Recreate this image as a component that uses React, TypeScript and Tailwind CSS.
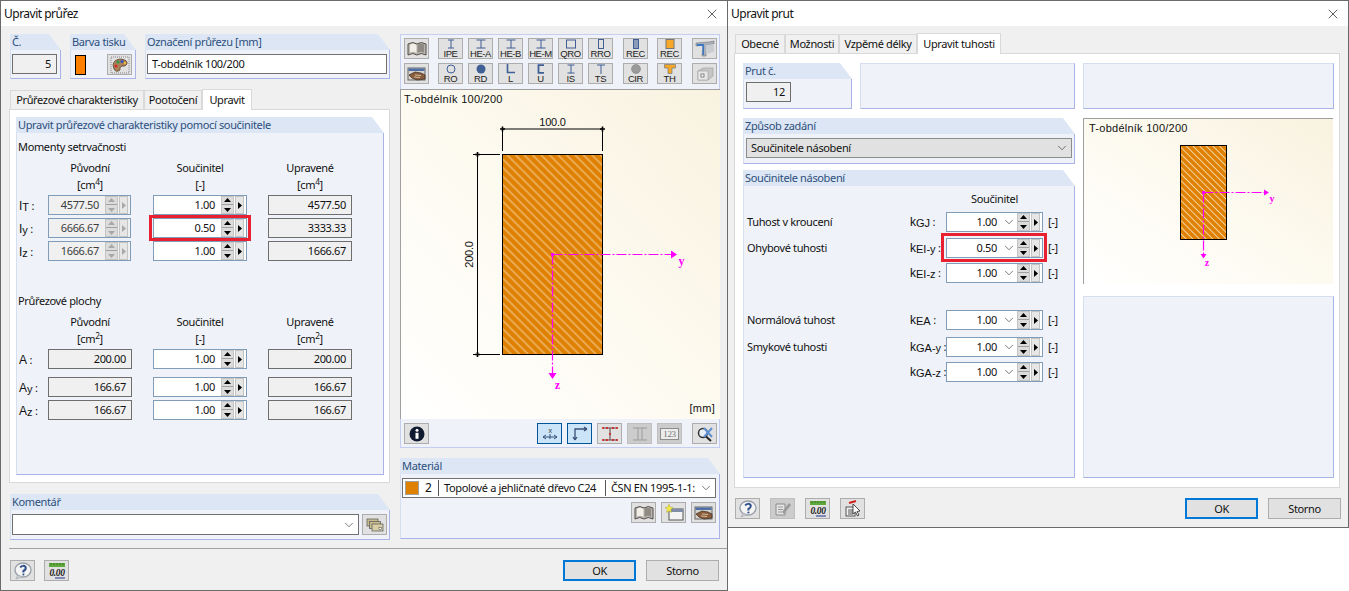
import type { ReactNode } from "react";
import { ChevronDown, X } from "lucide-react";

const NAVY = "#3f5f95";

function Group({ title, className = "", children }: { title?: string; className?: string; children?: ReactNode }) {
  return (
    <div className={`flex flex-col ${className}`}>
      {title && (
        <div className="h-4 shrink-0 bg-[#dce6f4] pl-[2px] text-[#2d4f7c] leading-4 [clip-path:polygon(0_0,calc(100%-12px)_0,100%_100%,0_100%)]">
          {title}
        </div>
      )}
      <div className={`flex-1 min-h-0 border-r border-b border-l border-r-[#a9b3e6] border-b-[#a9b3e6] border-l-[#d5dff0] bg-[#eff3f9] ${title ? "" : "border-t border-t-[#d5dff0]"}`}>
        {children}
      </div>
    </div>
  );
}

function Tri({ dir, color = "#000" }: { dir: "up" | "down" | "right"; color?: string }) {
  const pts = dir === "up" ? "0,4 3.5,0 7,4" : dir === "down" ? "0,0 7,0 3.5,4" : "0,0 4,3.5 0,7";
  const size = dir === "right" ? "h-[7px] w-1" : "h-1 w-[7px]";
  return (
    <svg viewBox={dir === "right" ? "0 0 4 7" : "0 0 7 4"} className={size}>
      <polygon points={pts} fill={color} />
    </svg>
  );
}

function Spin({ value, off, combo, width = "w-full" }: { value: string; off?: boolean; combo?: boolean; width?: string }) {
  const arrow = off ? "#a8a8a8" : "#000";
  return (
    <div className={`flex h-5 items-center border border-[#7f9db9] ${width} ${off ? "bg-[#f0f0f0] text-[#3c3c3c]" : "bg-white"}`}>
      <span className="flex-1 pr-[5px] text-right">{value}</span>
      {combo && <ChevronDown size={14} strokeWidth={1.2} className="text-[#444]" />}
      <div className="ml-px flex h-[18px] w-[13px] flex-col items-center justify-around border border-[#c4c4c4] bg-[#dcdcdc]">
        <Tri dir="up" color={arrow} />
        <div className="h-px w-full bg-[#a0a0a0]" />
        <Tri dir="down" color={arrow} />
      </div>
      <div className="mx-[2px] ml-px flex h-[18px] w-[9px] items-center justify-center border border-[#c4c4c4] bg-[#e6e6e6]">
        <Tri dir="right" color={arrow} />
      </div>
    </div>
  );
}

function Gray({ value, className = "" }: { value: string; className?: string }) {
  return <div className={`flex h-5 items-center justify-end border border-[#6e6e6e] bg-[#f0f0f0] pr-[5px] ${className}`}>{value}</div>;
}

function Red({ className }: { className: string }) {
  return <div className={`pointer-events-none absolute z-10 border-[3px] border-[#e8202f] ${className}`} />;
}

function Btn({ children, className = "", active, off }: { children?: ReactNode; className?: string; active?: boolean; off?: boolean }) {
  const look = active ? "border-[#005499] bg-[#cce4f7]" : off ? "border-[#bfbfbf] bg-[#cccccc]" : "border-[#adadad] bg-[#e1e1e1]";
  return <div className={`flex h-[21px] w-[25px] shrink-0 flex-col items-center justify-center border ${look} ${className}`}>{children}</div>;
}

function Book() {
  return (
    <svg viewBox="0 0 20 16" className="h-4 w-5">
      <path d="M1 3 Q6 0 10 3 Q14 0 19 3 V14 Q14 11 10 14 Q6 11 1 14 Z" fill="#b9b4ad" stroke="#55504c" strokeWidth="1" />
      <path d="M3 3.5 Q7 2 9.5 4 V12 Q7 10 3 11.5 Z" fill="#f2efe8" />
      <path d="M17 3.5 Q13 2 10.5 4 V12 Q13 10 17 11.5 Z" fill="#8f8a84" />
    </svg>
  );
}

function Hand() {
  return (
    <svg viewBox="0 0 20 16" className="h-4 w-5">
      <rect x="1" y="2" width="17" height="12" fill="#d8d4cc" stroke="#666" />
      <rect x="1.5" y="2.5" width="16" height="2.5" fill="#4f6fa8" />
      <path d="M2 9 L8 6 L14 7 L18 9 V13 L10 14 L5 12 Z" fill="#8a5d3c" stroke="#3a2a20" strokeWidth="0.7" />
      <path d="M8 9 L14 9.5 M7 11 L13 11.5" stroke="#e8d2b6" strokeWidth="0.8" />
    </svg>
  );
}

function Profile({ label, children }: { label: string; children: ReactNode }) {
  return (
    <Btn>
      <svg viewBox="0 0 14 10" className="h-[10px] w-[14px] shrink-0">
        {children}
      </svg>
      <span className="font-['Liberation_Sans',sans-serif] text-[9.5px] leading-[9px] tracking-[-0.4px] text-[#222]">{label}</span>
    </Btn>
  );
}

const iBeam = (half: number) => <path d={`M${7 - half} 1H${7 + half}M7 1V9M${7 - half} 9H${7 + half}`} stroke={NAVY} strokeWidth="1" fill="none" />;

const row1: ReactNode[] = [
  <Btn key="b"><Book /></Btn>,
  <Profile key="ipe" label="IPE">{iBeam(3)}</Profile>,
  <Profile key="hea" label="HE-A">{iBeam(4.5)}</Profile>,
  <Profile key="heb" label="HE-B">{iBeam(4.5)}</Profile>,
  <Profile key="hem" label="HE-M">{iBeam(4.5)}</Profile>,
  <Profile key="qro" label="QRO"><rect x="2.5" y="1" width="9" height="8" fill="none" stroke={NAVY} /></Profile>,
  <Profile key="rro" label="RRO"><rect x="4.5" y="0.5" width="5" height="9" fill="none" stroke={NAVY} /></Profile>,
  <Profile key="rec" label="REC"><rect x="4.5" y="0.5" width="5" height="9" fill="#8b9cba" stroke={NAVY} /></Profile>,
  <Profile key="reco" label="REC"><rect x="3" y="0.5" width="8" height="9" fill="#f6a828" stroke="#777" /></Profile>,
  <Btn key="p1">
    <svg viewBox="0 0 20 17" className="h-[17px] w-5">
      <path d="M1 3 L14 2 L19 1 V4 L12 5 L11 16 L7 16 L8 5 L1 6 Z" fill="#a9b0ba" stroke="#777" strokeWidth="0.6" />
      <path d="M2 4 H9 V15 H7.5 V6 H2 Z" fill="#3b78c4" />
      <path d="M11 5 L19 4 V12 L11 14 Z" fill="#c9ccd0" />
    </svg>
  </Btn>,
];

const row2: ReactNode[] = [
  <Btn key="h"><Hand /></Btn>,
  <Profile key="ro" label="RO"><circle cx="7" cy="5" r="4" fill="none" stroke={NAVY} /></Profile>,
  <Profile key="rd" label="RD"><circle cx="7" cy="5" r="4.5" fill={NAVY} /></Profile>,
  <Profile key="l" label="L"><path d="M3.5 0V8.5H11" fill="none" stroke={NAVY} strokeWidth="1.6" /></Profile>,
  <Profile key="u" label="U"><path d="M10 1.2H4.5V8.8H10" fill="none" stroke={NAVY} strokeWidth="1.8" /></Profile>,
  <Profile key="is" label="IS">{iBeam(3.5)}</Profile>,
  <Profile key="ts" label="TS"><path d="M3 1H11M7 1V10" fill="none" stroke={NAVY} /></Profile>,
  <Profile key="cir" label="CIR"><circle cx="7" cy="5" r="4.5" fill="#9a9a9a" stroke="#777" strokeWidth="0.5" /></Profile>,
  <Profile key="th" label="TH"><path d="M1.5 .5H12.5V4H9V9.5H5V4H1.5Z" fill="#f6a828" stroke="#777" strokeWidth="0.7" /></Profile>,
  <Btn key="p2">
    <svg viewBox="0 0 20 16" className="h-4 w-5">
      <path d="M3 5 L8 2 H18 V10 L13 14 H3 Z" fill="#c6c6c6" stroke="#9a9a9a" strokeWidth="0.6" />
      <rect x="3" y="5" width="10" height="9" fill="#e8e8e8" stroke="#9a9a9a" strokeWidth="0.6" />
      <rect x="6" y="8" width="3" height="3" fill="#fff" stroke="#555" strokeWidth="0.7" />
    </svg>
  </Btn>,
];

const toolGaps = ["", "ml-[9px]", "ml-[5px]", "ml-[5px]", "ml-[5px]", "ml-[5px]", "ml-[5px]", "ml-[10px]", "ml-[9px]", "ml-[10px]"];

function ToolRow({ items, className = "" }: { items: ReactNode[]; className?: string }) {
  return (
    <div className={`flex pl-[3px] ${className}`}>
      {items.map((item, i) => (
        <div key={i} className={toolGaps[i]}>
          {item}
        </div>
      ))}
    </div>
  );
}

function HelpIcon() {
  return (
    <svg viewBox="0 0 20 18" className="h-[18px] w-5">
      <ellipse cx="10" cy="8" rx="8" ry="7" fill="#f4f4f4" stroke="#9aa0aa" strokeWidth="1.4" />
      <path d="M5 13 L3 17 L9 14.5 Z" fill="#cfcfcf" stroke="#9aa0aa" strokeWidth="0.6" />
      <path d="M7.2 5.5 Q10 2.5 12.6 5 Q13.4 7.5 10.4 9 V10.5" fill="none" stroke="#31518c" strokeWidth="2" />
      <circle cx="10.4" cy="12.5" r="1.1" fill="#31518c" />
    </svg>
  );
}

function NumIcon() {
  return (
    <svg viewBox="0 0 20 18" className="h-[18px] w-5">
      <rect x="2" y="1" width="16" height="4" fill="#5fa83c" />
      <path d="M4 1V3M7 1V3M10 1V3M13 1V3M16 1V3" stroke="#2f6a1e" strokeWidth="0.7" />
      <text x="10" y="14" textAnchor="middle" fontSize="9.5" fontStyle="italic" fontWeight="700" fontFamily="Liberation Serif, serif" fill="#222">0.00</text>
      <path d="M8 16H18" stroke="#3a4f9a" strokeWidth="1.2" />
    </svg>
  );
}

function Sub({ base, sub }: { base: string; sub: string }) {
  return (
    <span className="font-['Liberation_Sans',sans-serif] text-[12px] tracking-normal">
      {base}
      <span className="align-[-1px] text-[11px]">{sub}</span>
    </span>
  );
}

function Diagram({ id, viewBox, className, hatch, children }: { id: string; viewBox: string; className: string; hatch: number; children: ReactNode }) {
  return (
    <svg viewBox={viewBox} className={`absolute inset-0 ${className}`}>
      <defs>
        <pattern id={id} width={hatch} height={hatch} patternUnits="userSpaceOnUse" patternTransform="rotate(-45)">
          <rect width={hatch} height={hatch} fill="#e08000" />
          <line x1={hatch / 2} y1="0" x2={hatch / 2} y2={hatch} stroke="#f5d5a5" strokeWidth="1" />
        </pattern>
      </defs>
      {children}
    </svg>
  );
}

function Canvas({ className, children }: { className: string; children: ReactNode }) {
  return (
    <div className={`relative flex flex-col justify-between border-t border-l border-[#a0a0a0] bg-linear-to-bl from-[#f8f2df] via-[#fdfaf0] to-white font-['Liberation_Sans',sans-serif] text-[11px] tracking-[0.25px] ${className}`}>
      {children}
    </div>
  );
}

const colTemplate = "grid grid-cols-[31px_84px_21px_94px_21px_84px] items-center";

function ColHeads({ unit }: { unit: ReactNode }) {
  return (
    <div className={`${colTemplate} mt-[5px] text-center leading-4`}>
      <div />
      <div>Původní</div>
      <div />
      <div>Součinitel</div>
      <div />
      <div>Upravené</div>
      <div />
      <div className="mt-px h-[18px]">[cm{unit}]</div>
      <div />
      <div className="mt-px h-[18px]">[-]</div>
      <div />
      <div className="mt-px h-[18px]">[cm{unit}]</div>
    </div>
  );
}

function MomentRow({ base, sub, a, b, c, mark, className = "" }: { base: string; sub: string; a: string; b: string; c: string; mark?: boolean; className?: string }) {
  return (
    <div className={`${colTemplate} ${className}`}>
      <div className="pl-[2px] pt-[3px]"><Sub base={base} sub={sub} /> :</div>
      <Spin value={a} off width="w-[83px]" />
      <div />
      <div className="relative">
        {mark && <Red className="-left-1 -right-1 -top-[3px] -bottom-[3px]" />}
        <Spin value={b} />
      </div>
      <div />
      <Gray value={c} />
    </div>
  );
}

function AreaRow({ base, sub, a, b, className = "" }: { base: string; sub?: string; a: string; b: string; className?: string }) {
  return (
    <div className={`${colTemplate} ${className}`}>
      <div className="pl-[2px] pt-[3px]"><Sub base={base} sub={sub ?? ""} /> :</div>
      <Gray value={a} />
      <div />
      <Spin value={b} />
      <div />
      <Gray value={a} />
    </div>
  );
}

function Tab({ label, width, active }: { label: string; width: string; active?: boolean }) {
  return (
    <div className={`flex items-center justify-center border border-b-0 border-[#d9d9d9] ${width} ${active ? "z-10 -mb-px h-[21px] bg-white" : "h-[19px] bg-[#f0f0f0]"}`}>
      {label}
    </div>
  );
}

function FooterButtons() {
  return (
    <div className="flex gap-[10px]">
      <div className="flex h-[21px] w-[73px] items-center justify-center border-2 border-[#0078d7] bg-[#e1e1e1]">OK</div>
      <div className="flex h-[21px] w-[73px] items-center justify-center border border-[#adadad] bg-[#e1e1e1]">Storno</div>
    </div>
  );
}

function StiffRow({ label, base, sub, value, mark, className = "" }: { label?: string; base: string; sub: string; value: string; mark?: boolean; className?: string }) {
  return (
    <div className={`flex h-5 items-center ${className}`}>
      <div className="w-[166px] pl-[3px]">{label}</div>
      <div className="w-[36px] whitespace-nowrap"><Sub base={base} sub={sub} /> :</div>
      <div className="relative w-[97px]">
        {mark && <Red className="-left-[5px] -right-1 -top-[5px] -bottom-1" />}
        <Spin value={value} combo />
      </div>
      <div className="ml-[5px]">[-]</div>
    </div>
  );
}

function LeftWindow() {
  return (
    <div className="flex h-[591px] w-[728px] shrink-0 flex-col border-t border-r border-b border-l border-[#6a6a6a] bg-[#f0f0f0]">
      <div className="flex h-[25px] shrink-0 items-center justify-between bg-white pl-[3px] pr-[7px] text-[12px] tracking-[-0.5px]">
        <span>Upravit průřez</span>
        <X size={16} strokeWidth={1} />
      </div>
      <div className="flex pl-2">
        <div className="w-[381px]">
          <div className="ml-px mt-2 flex h-[45px] gap-[9px]">
            <Group title="Č." className="w-[51px]">
              <Gray value="5" className="ml-px mt-1 w-[45px]" />
            </Group>
            <Group title="Barva tisku" className="w-[66px]">
              <div className="ml-1 mt-1 flex items-center">
                <div className="h-5 w-[11px] border border-black bg-[#ff8000]" />
                <Btn className="ml-[21px]">
                  <svg viewBox="0 0 20 18" className="h-[18px] w-5">
                    <rect x="1" y="1" width="18" height="16" fill="none" stroke="#444" strokeWidth="0.6" strokeDasharray="1 1" />
                    <path d="M3 9 Q4 3 11 3 Q18 4 17 8 Q15 11 12 10 Q9 11 10 14 Q6 17 4 13 Z" fill="#a9825a" stroke="#4a3420" strokeWidth="0.7" />
                    <circle cx="8" cy="6" r="1.5" fill="#2f9a44" />
                    <circle cx="12" cy="5.5" r="1.5" fill="#3150c0" />
                    <circle cx="6" cy="10" r="1.6" fill="#d42a2a" />
                    <circle cx="15" cy="7" r="1.2" fill="#e8c030" />
                  </svg>
                </Btn>
              </div>
            </Group>
            <Group title="Označení průřezu [mm]" className="w-[245px]">
              <div className="ml-px mt-1 flex h-5 w-[240px] items-center border border-[#707070] bg-white pl-1">T-obdélník 100/200</div>
            </Group>
          </div>

          <div className="mt-[10px] flex h-5 items-end pl-[1px]">
            <Tab label="Průřezové charakteristiky" width="w-[134px]" />
            <Tab label="Pootočení" width="w-[58px]" />
            <Tab label="Upravit" width="w-[50px]" active />
          </div>
          <div className="h-[374px] border border-[#d9d9d9] bg-white pl-[6px] pt-[7px]">
            <Group title="Upravit průřezové charakteristiky pomocí součinitele" className="h-[358px] w-[368px]">
              <div className="mt-[6px] pl-px leading-4">Momenty setrvačnosti</div>
              <ColHeads unit={<sup>4</sup>} />
              <MomentRow base="I" sub="T" a="4577.50" b="1.00" c="4577.50" />
              <MomentRow base="I" sub="y" a="6666.67" b="0.50" c="3333.33" mark className="mt-[3px]" />
              <MomentRow base="I" sub="z" a="1666.67" b="1.00" c="1666.67" className="mt-[3px]" />
              <div className="mt-8 pl-px leading-4">Průřezové plochy</div>
              <ColHeads unit={<sup>2</sup>} />
              <AreaRow base="A" a="200.00" b="1.00" />
              <AreaRow base="A" sub="y" a="166.67" b="1.00" className="mt-2" />
              <AreaRow base="A" sub="z" a="166.67" b="1.00" className="mt-[3px]" />
            </Group>
          </div>

          <Group title="Komentář" className="ml-px mt-[11px] h-[46px] w-[380px]">
            <div className="ml-px mt-1 flex gap-[3px]">
              <div className="flex h-[21px] w-[347px] items-center justify-end border border-[#707070] bg-white pr-[2px]">
                <ChevronDown size={14} strokeWidth={1.2} className="text-[#444]" />
              </div>
              <Btn>
                <svg viewBox="0 0 18 14" className="h-[14px] w-[18px]">
                  <rect x="1" y="1" width="11" height="7" fill="#c8bc8e" stroke="#555" strokeWidth="0.7" />
                  <rect x="3.5" y="3.5" width="11" height="7" fill="#c8bc8e" stroke="#555" strokeWidth="0.7" />
                  <rect x="6" y="6" width="11" height="7" fill="#d8cfa6" stroke="#555" strokeWidth="0.7" />
                  <rect x="13" y="9.5" width="2.5" height="2" fill="#fff" stroke="#444" strokeWidth="0.5" />
                </svg>
              </Btn>
            </div>
          </Group>
        </div>

        <div className="ml-[10px] w-[320px]">
          <div className="mt-2 h-[55px] border-t border-r border-l border-[#c5cdf0] bg-[#eff3f9] pt-[3px]">
            <ToolRow items={row1} />
            <ToolRow items={row2} className="mt-1" />
          </div>
          <Canvas className="h-[330px]">
            <Diagram id="hatchA" viewBox="401 90 320 330" className="h-[330px] w-[320px]" hatch={6}>
              <path d="M502.5 129H602.5M502.5 129V151M602.5 129V151M477.5 154.5V354.5M473 154.5H500M473 354.5H500" stroke="#000" fill="none" />
              <path d="M500 129H505M502.5 126.5V131.5M600 129H605M602.5 126.5V131.5M475 154.5H480M477.5 152V157M475 354.5H480M477.5 352V357" stroke="#000" strokeWidth="1.6" />
              <rect x="502.5" y="154.5" width="100" height="200" fill="url(#hatchA)" stroke="#000" />
              <text x="552.5" y="126" textAnchor="middle" fontSize="11" letterSpacing="-0.2" fill="#111">100.0</text>
              <text transform="translate(473 254.5) rotate(-90)" textAnchor="middle" fontSize="11" letterSpacing="-0.2" fill="#111">200.0</text>
              <path d="M552.5 254.5H672M552.5 254.5V374" stroke="#ff00ff" strokeWidth="1.2" strokeDasharray="10 2 2 2" fill="none" />
              <rect x="551" y="253" width="3" height="3" fill="#ff00ff" />
              <path d="M671 250.5L677 254.5L671 258.5Z M548.5 373L552.5 379L556.5 373Z" fill="#ff00ff" />
              <text x="681.5" y="265" textAnchor="middle" fontSize="12" fontWeight="700" fontFamily="Liberation Serif, serif" fill="#ff00ff">y</text>
              <text x="557.5" y="389" textAnchor="middle" fontSize="12" fontWeight="700" fontFamily="Liberation Serif, serif" fill="#ff00ff">z</text>
            </Diagram>
            <div className="relative pl-[3px] pt-[2px] leading-[15px]">T-obdélník 100/200</div>
            <div className="relative pb-[3px] pr-[5px] text-right text-[11px] leading-[15px]">[mm]</div>
          </Canvas>
          <div className="flex h-[29px] items-start border-r border-b border-l border-r-[#c5cdf0] border-b-[#c5cdf0] border-l-[#c5cdf0] bg-[#eff3f9] pl-[3px] pt-1">
            <Btn>
              <svg viewBox="0 0 16 16" className="h-4 w-4">
                <circle cx="8" cy="8" r="7.5" fill="#101a30" />
                <circle cx="8" cy="4.2" r="1.5" fill="#fff" />
                <rect x="6.5" y="6.8" width="3" height="6" fill="#fff" />
              </svg>
            </Btn>
            <Btn active className="ml-[108px]">
              <svg viewBox="0 0 18 14" className="h-[14px] w-[18px]">
                <text x="9" y="6" textAnchor="middle" fontSize="7" fontFamily="Liberation Sans, sans-serif" fill="#333">x</text>
                <path d="M2 10H16M2 10L5 8M2 10L5 12M16 10L13 8M16 10L13 12M9 7V12" stroke="#34517c" fill="none" />
              </svg>
            </Btn>
            <Btn active className="ml-[5px]">
              <svg viewBox="0 0 18 16" className="h-4 w-[18px]">
                <path d="M4 14V3H16M4 14L2 11M4 14L6 11M16 3L13 1M16 3L13 5" stroke="#3b4f78" strokeWidth="1.3" fill="none" />
              </svg>
            </Btn>
            <Btn className="ml-[5px]">
              <svg viewBox="0 0 18 16" className="h-4 w-[18px]">
                <path d="M2 2H16M9 2V14M2 14H16" stroke="#6a3a3a" fill="none" />
                <path d="M2 2h.01M6 2h.01M12 2h.01M16 2h.01M2 14h.01M6 14h.01M12 14h.01M16 14h.01M9 8h.01" stroke="#d01818" strokeWidth="2" strokeLinecap="round" />
              </svg>
            </Btn>
            <Btn off className="ml-[5px]">
              <svg viewBox="0 0 18 16" className="h-4 w-[18px]">
                <path d="M2 2H16M7 2V14M11 2V14M2 14H16" stroke="#9c9c9c" fill="none" />
              </svg>
            </Btn>
            <Btn off className="ml-[5px]">
              <div className="border border-[#8c8c8c] bg-[#ececec] px-[2px] font-['Liberation_Serif',serif] text-[9px] leading-[10px] text-[#777]">123</div>
            </Btn>
            <Btn className="ml-[10px]">
              <svg viewBox="0 0 18 16" className="h-4 w-[18px]">
                <circle cx="7" cy="7" r="4.5" fill="#e8eef6" stroke="#333" strokeWidth="1.5" />
                <path d="M10 10.5L15 15" stroke="#222" strokeWidth="2" />
                <path d="M8 2L16 11M16 2L8 11" stroke="#5f8fd0" strokeWidth="2" />
              </svg>
            </Btn>
          </div>

          <Group title="Materiál" className="mt-[10px] h-[81px] w-[320px]">
            <div className="ml-px mt-1 flex h-5 w-[314px] items-center border border-[#707070] bg-white">
              <div className="ml-[2px] h-[14px] w-[14px] border border-[#a0a0a0] bg-[#e08000]" />
              <span className="ml-[6px] w-3 text-[12px]">2</span>
              <div className="ml-[1px] h-4 border-l border-[#555]" />
              <span className="ml-[5px] w-[161px] whitespace-nowrap">Topolové a jehličnaté dřevo C24</span>
              <div className="h-4 border-l border-[#555]" />
              <span className="ml-[5px] flex-1 whitespace-nowrap">ČSN EN 1995-1-1:</span>
              <ChevronDown size={14} strokeWidth={1.2} className="mr-[2px] text-[#444]" />
            </div>
            <div className="mt-[4px] flex justify-end gap-[5px] pr-[3px]">
              <Btn><Book /></Btn>
              <Btn>
                <svg viewBox="0 0 20 17" className="h-[17px] w-5">
                  <rect x="5" y="5" width="14" height="11" fill="#f4f4f4" stroke="#555" />
                  <rect x="5" y="5" width="14" height="3" fill="#7f8ea6" />
                  <path d="M5 0L6.2 3L9 3.5L6.8 5.5L7.4 8.5L5 7L2.6 8.5L3.2 5.5L1 3.5L3.8 3Z" fill="#f3e84a" stroke="#a89a20" strokeWidth="0.4" />
                </svg>
              </Btn>
              <Btn><Hand /></Btn>
            </div>
          </Group>
        </div>
      </div>

      <div className="ml-2 mt-2 border-t border-[#a0a0a0]" />
      <div className="mt-[11px] flex items-center justify-between pl-[9px] pr-2">
        <div className="flex gap-[9px]">
          <Btn><HelpIcon /></Btn>
          <Btn><NumIcon /></Btn>
        </div>
        <FooterButtons />
      </div>
    </div>
  );
}

function RightWindow() {
  return (
    <div className="flex h-[528px] w-[621px] shrink-0 flex-col border-t border-r border-b border-[#6a6a6a] bg-[#f0f0f0]">
      <div className="flex h-[25px] shrink-0 items-center justify-between bg-white pl-[3px] pr-[7px] text-[12px] tracking-[-0.5px]">
        <span>Upravit prut</span>
        <X size={16} strokeWidth={1} />
      </div>
      <div className="ml-[6px] mt-[7px] flex h-5 items-end pl-px">
        <Tab label="Obecné" width="w-[50px]" />
        <Tab label="Možnosti" width="w-[54px]" />
        <Tab label="Vzpěmé délky" width="w-[78px]" />
        <Tab label="Upravit tuhosti" width="w-[84px]" active />
      </div>
      <div className="ml-[6px] flex h-[435px] w-[606px] gap-2 border border-[#d9d9d9] bg-white pl-2 pt-[9px]">
        <div className="w-[332px]">
          <div className="flex gap-2">
            <Group title="Prut č." className="h-[46px] w-[109px]">
              <Gray value="12" className="ml-[2px] mt-[3px] w-[45px]" />
            </Group>
            <Group className="h-[46px] w-[215px]" />
          </div>
          <Group title="Způsob zadání" className="mt-[9px] h-[46px]">
            <div className="ml-[2px] mt-1 flex h-5 w-[326px] items-center justify-between border border-[#8c8c8c] bg-[#e1e1e1] pl-1 pr-[2px]">
              <span>Součinitele násobení</span>
              <ChevronDown size={14} strokeWidth={1.2} className="text-[#444]" />
            </div>
          </Group>
          <Group title="Součinitele násobení" className="mt-[6px] h-[308px]">
            <div className="mt-[5px] h-4 pl-[202px] text-center leading-4">
              <div className="w-[97px]">Součinitel</div>
            </div>
            <StiffRow label="Tuhost v kroucení" base="k" sub="GJ" value="1.00" className="mt-[5px]" />
            <StiffRow label="Ohybové tuhosti" base="k" sub="EI-y" value="0.50" mark className="mt-[6px]" />
            <StiffRow base="k" sub="EI-z" value="1.00" className="mt-[5px]" />
            <StiffRow label="Normálová tuhost" base="k" sub="EA" value="1.00" className="mt-[27px]" />
            <StiffRow label="Smykové tuhosti" base="k" sub="GA-y" value="1.00" className="mt-[7px]" />
            <StiffRow base="k" sub="GA-z" value="1.00" className="mt-[5px]" />
          </Group>
        </div>
        <div className="w-[251px]">
          <Group className="h-[46px]" />
          <Canvas className="mt-[9px] h-[166px] w-[250px]">
            <Diagram id="hatchB" viewBox="1084 119 250 166" className="h-[166px] w-[250px]" hatch={4.7}>
              <rect x="1180.5" y="145.5" width="46" height="94" fill="url(#hatchB)" stroke="#000" />
              <path d="M1203.5 192.5H1265M1203.5 192.5V254" stroke="#ff00ff" strokeWidth="1.2" strokeDasharray="10 2 2 2" fill="none" />
              <rect x="1202" y="191" width="3" height="3" fill="#ff00ff" />
              <path d="M1264 189.5L1269 192.5L1264 195.5Z M1200.5 254L1203.5 258.5L1206.5 254Z" fill="#ff00ff" />
              <text x="1272" y="202" textAnchor="middle" fontSize="10" fontWeight="700" fontFamily="Liberation Serif, serif" fill="#ff00ff">y</text>
              <text x="1207" y="266" textAnchor="middle" fontSize="10" fontWeight="700" fontFamily="Liberation Serif, serif" fill="#ff00ff">z</text>
            </Diagram>
            <div className="relative pl-[5px] pt-[2px] leading-[15px]">T-obdélník 100/200</div>
          </Canvas>
          <Group className="mt-3 h-[182px]" />
        </div>
      </div>
      <div className="ml-[7px] mt-[10px] flex items-center justify-between pr-[7px]">
        <div className="flex gap-[10px]">
          <Btn><HelpIcon /></Btn>
          <Btn off>
            <svg viewBox="0 0 18 16" className="h-4 w-[18px]">
              <path d="M2 3H11V14H2Z" fill="#e4e4e4" stroke="#8a8a8a" />
              <path d="M4 6H9M4 8.5H9M4 11H8" stroke="#9a9a9a" />
              <path d="M8 11L15 2L17 4L10 13Z" fill="#9a9a9a" />
            </svg>
          </Btn>
          <Btn><NumIcon /></Btn>
          <Btn>
            <svg viewBox="0 0 18 17" className="h-[17px] w-[18px]">
              <rect x="2" y="7" width="9" height="9" fill="#f2f2f2" stroke="#555" />
              <path d="M4 10H9M4 12H9M4 14H9" stroke="#555" />
              <path d="M5 3L12 1" stroke="#d02020" strokeWidth="2" />
              <path d="M9 4L9 14L11.5 12L13.5 16L15 15L13 11.5L16 11Z" fill="#fff" stroke="#222" strokeWidth="0.8" />
            </svg>
          </Btn>
        </div>
        <FooterButtons />
      </div>
    </div>
  );
}

export default function App() {
  return (
    <div className="flex h-[591px] w-[1349px] items-start overflow-hidden bg-white font-['Noto_Sans',sans-serif] text-[11px] leading-[14px] tracking-[-0.35px] text-[#111]">
      <LeftWindow />
      <RightWindow />
    </div>
  );
}
